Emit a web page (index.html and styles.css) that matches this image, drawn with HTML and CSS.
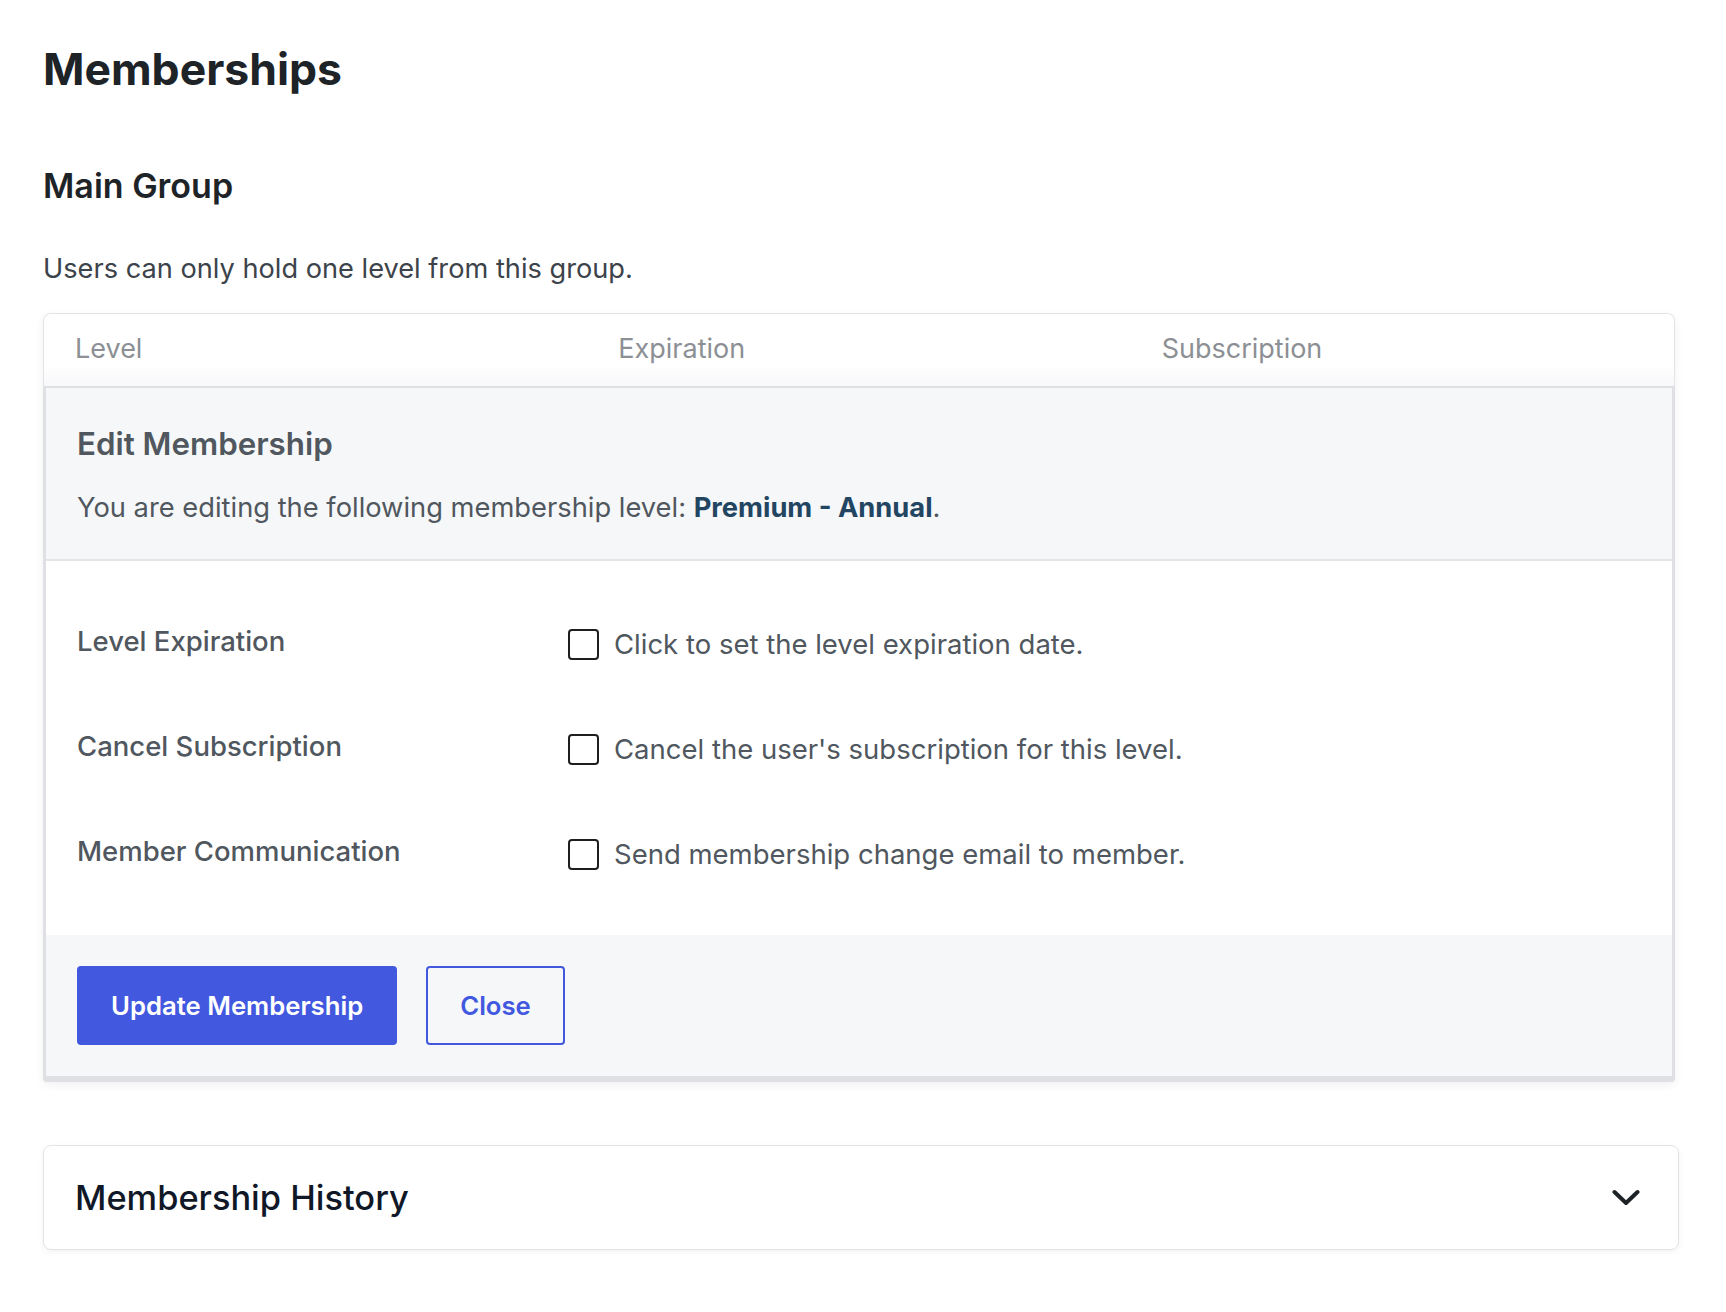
FILE: index.html
```html
<!DOCTYPE html>
<html lang="en">
  <head>
    <meta charset="UTF-8">
    <title>Memberships</title>
    <link rel="stylesheet" href="styles.css">
  </head>
  <body>
    <div class="page">
      <h1 class="titre">Memberships</h1>
      <h2 class="groupe-titre">Main Group</h2>
      <p class="groupe-note">Users can only hold one level from this group.</p>

      <div class="carte">
        <div class="carte-entete">
          <div class="colonne">Level</div>
          <div class="colonne">Expiration</div>
          <div class="colonne">Subscription</div>
        </div>
        <div class="edition">
          <div class="edition-haut">
            <h3>Edit Membership</h3>
            <p>You are editing the following membership level: <strong>Premium - Annual</strong>.</p>
          </div>
          <div class="edition-corps">
            <div class="ligne">
              <div class="ligne-label">Level Expiration</div>
              <label class="ligne-choix"><input type="checkbox"> Click to set the level expiration date.</label>
            </div>
            <div class="ligne">
              <div class="ligne-label">Cancel Subscription</div>
              <label class="ligne-choix"><input type="checkbox"> Cancel the user's subscription for this level.</label>
            </div>
            <div class="ligne">
              <div class="ligne-label">Member Communication</div>
              <label class="ligne-choix"><input type="checkbox"> Send membership change email to member.</label>
            </div>
          </div>
          <div class="edition-bas">
            <button class="bouton bouton-plein">Update Membership</button>
            <button class="bouton bouton-vide">Close</button>
          </div>
        </div>
      </div>

      <div class="historique">
        <span>Membership History</span>
        <svg class="chevron" width="28" height="18" viewBox="0 0 28 18">
          <path d="M2.5 3 L14 14 L25.5 3" fill="none" stroke="#1d2327" stroke-width="4" stroke-linecap="round" stroke-linejoin="round"/>
        </svg>
      </div>
    </div>
  </body>
</html>
```

FILE: styles.css
```css
body {
  margin: 0;
  background: #fff;
  font-family: Inter, "Liberation Sans", sans-serif;
  color: #3c434a;
}
.page {
  width: 1636px;
  padding: 0 0 60px 43px;
}
.titre {
  margin: 42px 0 0;
  font-size: 44.5px;
  line-height: 54px;
  font-weight: 700;
  color: #1d2327;
}
.groupe-titre {
  margin: 70px 0 0;
  font-size: 34px;
  line-height: 40px;
  font-weight: 600;
  color: #1d2327;
}
.groupe-note {
  margin: 45px 0 0;
  font-size: 27.2px;
  line-height: 36px;
}
.carte {
  width: 1632px;
  box-sizing: border-box;
  margin-top: 26px;
  border: 1px solid #e3e4e8;
  border-bottom: 0;
  border-radius: 8px 8px 4px 4px;
  box-shadow: 0 3px 10px rgba(0,0,0,0.06);
}
.carte-entete {
  display: grid;
  grid-template-columns: 1fr 1fr 1fr;
  padding: 17px 0 19px;
  font-size: 27px;
  line-height: 36px;
  color: #8c8f94;
  border-radius: 8px 8px 0 0;
  background: linear-gradient(#fff 70%, #f8f8fa);
}
.colonne {
  padding-left: 31px;
}
.edition {
  margin: 0 -1px;
  border: 3px solid #dfe0e4;
  border-top-width: 2px;
  border-bottom-width: 6px;
  border-radius: 0 0 4px 4px;
  color: #50575e;
}
.edition-haut {
  background: #f6f7f9;
  padding: 36px 31px 33px;
  border-bottom: 2px solid #e3e4e7;
}
.edition-haut h3 {
  margin: 0;
  font-size: 31.3px;
  line-height: 40px;
  font-weight: 600;
}
.edition-haut p {
  margin: 26px 0 0;
  font-size: 27.3px;
  line-height: 36px;
}
.edition-haut strong {
  color: #224562;
  font-weight: 650;
}
.edition-corps {
  background: #fff;
  padding: 65px 31px 63px;
  display: flex;
  flex-direction: column;
  gap: 69px;
}
.ligne {
  display: grid;
  grid-template-columns: 491px 1fr;
  align-items: center;
  font-size: 27.5px;
  line-height: 36px;
}
.ligne-label {
  font-weight: 500;
  margin-top: -6px;
}
.ligne-choix {
  display: flex;
  align-items: center;
  gap: 15px;
}
.ligne-choix input {
  appearance: none;
  margin: 0;
  width: 31px;
  height: 31px;
  border: 2px solid #1e1e1e;
  border-radius: 4px;
  background: #fff;
}
.edition-bas {
  background: #f6f7f9;
  padding: 31px 31px;
  display: flex;
  gap: 29px;
}
.bouton {
  height: 79px;
  padding: 0 34px;
  border-radius: 4px;
  font-family: inherit;
  font-size: 25.7px;
  font-weight: 600;
}
.bouton-plein {
  background: #4158df;
  border: 0;
  color: #fff;
}
.bouton-vide {
  padding: 0 32px;
  background: transparent;
  border: 2px solid #4158df;
  color: #4158df;
}
.historique {
  width: 1636px;
  box-sizing: border-box;
  margin-top: 63px;
  height: 105px;
  border: 1px solid #e2e3e7;
  border-radius: 8px;
  box-shadow: 0 2px 6px rgba(0,0,0,0.05);
  padding: 0 38px 0 31px;
  display: flex;
  align-items: center;
  justify-content: space-between;
  font-size: 34.4px;
  font-weight: 500;
  color: #101828;
}
```
